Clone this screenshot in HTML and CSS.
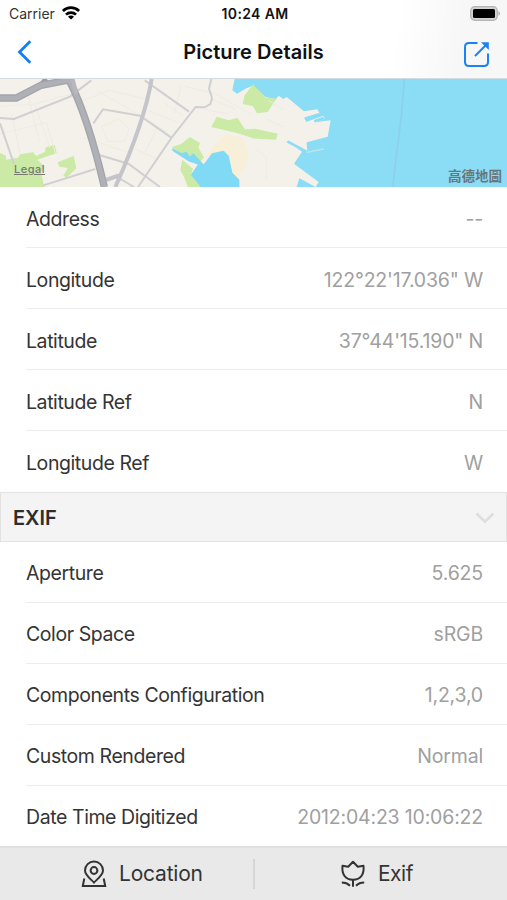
FILE: index.html
```html
<!DOCTYPE html>
<html lang="en">

<head>
    <meta charset="UTF-8">
    <meta name="viewport" content="width=device-width, initial-scale=1.0">
    <title>Picture Details</title>
    <link rel="stylesheet" href="styles.css">
</head>

<body>
    <div class="screen">
        <header class="header">
            <div class="status-bar">
                <div class="carrier">
                    <span>Carrier</span>
                    <svg class="wifi" viewBox="0 0 18 14" fill="none" stroke="#000" stroke-width="2.7">
                        <path d="M.9 5a11.5 11.5 0 0 1 16.2 0" />
                        <path d="M4 8.6a7.1 7.1 0 0 1 10 0" />
                        <path d="M9 13.6L6 10.7a4.2 4.2 0 0 1 6 0z" fill="#000" stroke="none" />
                    </svg>
                </div>
                <span class="time">10:24 AM</span>
                <svg class="battery" viewBox="0 0 31 15">
                    <rect x=".7" y=".7" width="26.6" height="13.6" rx="4" fill="#d2d2d2" stroke="#b4b4b4" stroke-width="1.2" />
                    <rect x="3" y="3" width="22" height="9" rx="1.5" fill="#000" />
                    <path d="M28.4 5q3.4 2.5 0 5z" fill="#b4b4b4" />
                </svg>
            </div>
            <div class="nav-bar">
                <svg class="back" viewBox="0 0 15 24" fill="none" stroke="#127df8" stroke-width="2.8">
                    <path d="M13.3 1.3L2.5 12l10.8 10.7" />
                </svg>
                <h1 class="title">Picture Details</h1>
                <svg class="share" viewBox="0 0 27 27" fill="none" stroke="#1a82f7" stroke-width="2">
                    <path d="M14.5 2H6Q2 2 2 6v15q0 4 4 4h15q4 0 4-4v-8.5" />
                    <path d="M12 15L23.5 3.5" />
                    <path d="M18 1.2h7.8V9z" fill="#1a82f7" stroke="none" />
                </svg>
            </div>
        </header>

        <div class="map">
            <svg class="map-tiles" viewBox="0 0 1521 324" preserveAspectRatio="none">
                <rect width="1521" height="324" fill="#8bdcf5" />
                <path d="M1213 0L1204 110L1178 324" fill="none" stroke="#8fcfee" stroke-width="5" />
                <!-- land -->
                <path d="M0 0H704L697 34L711 44L739 28L759 20L796 54L828 60L836 50L850 60L860 54L912 97L952 91L959 103L916 118L918 129L970 110L974 119L944 130L992 124L983 173L920 190L922 220L865 196L861 186L906 218L882 254L956 309L947 324L898 298L890 324H718L709 292L697 281L686 231L671 215L636 224L611 256L594 257L582 240L569 247L518 211L516 204L570 176L612 235L594 257L573 287L604 324H0Z" fill="#f3f1ea" />
                <path d="M640 202L680 165L725 178L746 224L730 275L711 300L697 281L686 231L671 215L636 224L612 242Z" fill="#f7efd7" />
                <!-- parks -->
                <g fill="#caeaa5">
                    <path d="M0 222L18 230V242L54 236L60 226L99 220L109 231L135 218L137 205L164 198L170 222L112 242L132 261L123 281L133 324H0Z" />
                    <path d="M173 250L221 231L229 268L200 296L190 290L203 267L178 263Z" />
                    <path d="M734 49L759 16L797 56L829 59L803 99L771 103L759 82L728 75Z" />
                    <path d="M650 113L687 124L712 116L735 151L766 149L833 164L828 182L759 178L714 163L634 144Z" />
                    <path d="M516 204L543 195L570 174L600 192L595 206L612 235L594 257L577 237L567 247L549 230Z" />
                    <path d="M547 242L579 270L573 286L602 324H564L552 294L541 273Z" />
                </g>
                <!-- bays and docks -->
                <path d="M516 207L545 223L560 218L569 233L580 223L612 257L636 223L671 215L686 231L697 281L718 302V324H602L573 287L594 257L581 252L568 248L518 216Z" fill="#80d9f5" />
                <path d="M914 119L957 106M943 127L971 117M862 187L925 221" fill="none" stroke="#8bdcf5" stroke-width="8" />
                <path d="M920 220L971 210" fill="none" stroke="#c8e3e5" stroke-width="4" />
                <!-- side streets -->
                <g fill="none" stroke="#eeebe5" stroke-width="3">
                    <path d="M0 82L100 76L225 42M0 165L139 131L167 225M80 32L118 190M35 105L60 225M104 75L150 207M239 68L330 34L450 63M292 36L408 101M250 175L398 225M305 142L356 120L387 147L374 187L325 188ZM435 120L503 160M405 210L468 238M435 220L475 140M445 95L535 131M488 68L548 110M543 20L523 104M554 22L648 45L754 107M638 62L706 90M615 92L682 104M805 64L849 92M800 121L853 145M765 208L799 235V301" />
                </g>
                <!-- streets -->
                <g fill="none" stroke="#d0cfd2" stroke-width="6">
                    <path d="M0 117L42 120L210 53L274 4M0 133L42 255M130 319L286 270M280 133L309 91L420 110L514 176M300 229L385 254L480 324M434 4L567 98M634 0L627 29L636 57L631 75L614 85L587 84L515 176L414 324M352 294L402 324" />
                </g>
                <path d="M455 0C440 90 398 208 346 324M318 303L352 291L359 306" fill="none" stroke="#c5c4ca" stroke-width="12" />
                <!-- freeway -->
                <g fill="none">
                    <path d="M0 57H49L123 20L140 0M171 3L203 2" stroke="#9c9ca5" stroke-width="18" />
                    <path d="M0 57H49L123 19L207 3C250 86 287 212 313 324" stroke="#a4a4ac" stroke-width="22" />
                    <path d="M0 57H49L123 19L207 3C250 86 287 212 313 324" stroke="#b0b0b7" stroke-width="14" />
                    <path d="M218 0L229 45" stroke="#b8b7bd" stroke-width="12" />
                </g>
            </svg>
            <span class="legal">Legal</span>
            <span class="map-brand">高德地圖</span>
        </div>

        <div class="list gps">
            <div class="row"><span class="label">Address</span><span class="value">--</span></div>
            <div class="row"><span class="label">Longitude</span><span class="value">122°22'17.036" W</span></div>
            <div class="row"><span class="label">Latitude</span><span class="value">37°44'15.190" N</span></div>
            <div class="row"><span class="label">Latitude Ref</span><span class="value">N</span></div>
            <div class="row"><span class="label">Longitude Ref</span><span class="value">W</span></div>
        </div>

        <div class="section-header">
            <h2>EXIF</h2>
            <svg class="chevron" viewBox="0 0 20 12" fill="none" stroke="#dedede" stroke-width="2.5">
                <path d="M1.5 1.5L10 9.7l8.5-8.2" />
            </svg>
        </div>

        <div class="list">
            <div class="row"><span class="label">Aperture</span><span class="value">5.625</span></div>
            <div class="row"><span class="label">Color Space</span><span class="value">sRGB</span></div>
            <div class="row"><span class="label">Components Configuration</span><span class="value">1,2,3,0</span></div>
            <div class="row"><span class="label">Custom Rendered</span><span class="value">Normal</span></div>
            <div class="row"><span class="label">Date Time Digitized</span><span class="value">2012:04:23 10:06:22</span></div>
        </div>

        <footer class="tab-bar">
            <div class="tab tab-location">
                <svg class="tab-icon" viewBox="0 0 26 28" fill="none" stroke="#333" stroke-width="2">
                    <path d="M13 22.5C9 18.5 4 15 4 10.5a9 9 0 0 1 18 0c0 4.5-5 8-9 12z" />
                    <circle cx="13" cy="10.5" r="3.4" />
                    <path d="M3.3 18.5L1.8 26h22.4l-1.5-7.5" />
                </svg>
                <span>Location</span>
            </div>
            <div class="divider"></div>
            <div class="tab tab-exif">
                <svg class="tab-icon" viewBox="0 0 26 28" fill="none" stroke="#333" stroke-width="2" stroke-linejoin="round">
                    <path d="M2.5 5.8l5.7 1L13 1.8l4.8 5 5.7-1c.8 8-2.3 14-10.5 14S1.7 13.8 2.5 5.8z" />
                    <path d="M13 20v6.8M1.8 22.5q5 0 8.2 3.2M24.2 22.5q-5 0-8.2 3.2" />
                </svg>
                <span>Exif</span>
            </div>
        </footer>
    </div>
</body>

</html>
```
FILE: styles.css
```css
* {
    box-sizing: border-box;
}

body {
    margin: 0;
    font-family: Inter, "Liberation Sans", sans-serif;
    background-color: #fff;
    color: #343434;
    overflow: hidden;
}

.screen {
    width: 507px;
    height: 900px;
    display: flex;
    flex-direction: column;
}

svg {
    display: block;
    flex-shrink: 0;
}

.header {
    height: 79px;
    background: linear-gradient(100deg, #fff 77%, #f7f7f8 90%);
    border-bottom: 1px solid #d3dcde;
}

.status-bar {
    height: 27px;
    padding: 0 6px 0 9px;
    display: grid;
    grid-template-columns: 1fr auto 1fr;
    align-items: center;
    font-size: 14px;
    color: #333;
}

.carrier {
    display: flex;
    align-items: center;
    gap: 7px;
}

.wifi {
    width: 18px;
    height: 14px;
    margin-bottom: 2px;
}

.time {
    font-size: 14px;
    font-weight: 600;
    color: #111;
    letter-spacing: 0.35px;
}

.battery {
    width: 31px;
    height: 15px;
    justify-self: end;
    margin-bottom: 1px;
}

.nav-bar {
    height: 51px;
    padding: 0 17px 1px;
    display: grid;
    grid-template-columns: 1fr auto 1fr;
    align-items: center;
}

.back {
    width: 15px;
    height: 24px;
}

.title {
    margin: 0;
    font-size: 20px;
    font-weight: 600;
    letter-spacing: 0.05px;
    color: #111;
}

.share {
    width: 27px;
    height: 27px;
    justify-self: end;
    margin-top: 4px;
}

.map {
    position: relative;
    height: 108px;
}

.map-tiles {
    width: 100%;
    height: 100%;
}

.legal {
    position: absolute;
    left: 14px;
    bottom: 11px;
    font-size: 11px;
    line-height: 14px;
    font-weight: 500;
    letter-spacing: 0.5px;
    text-decoration: underline;
    color: #77786f;
}

.map-brand {
    position: absolute;
    right: 5px;
    bottom: 3px;
    font-family: "Noto Sans CJK TC", sans-serif;
    font-size: 13.5px;
    line-height: 18px;
    font-weight: 700;
    color: #67777c;
}

.list {
    padding-left: 26px;
}

.row {
    height: 61px;
    padding: 1px 24px 0 0;
    display: flex;
    align-items: center;
    justify-content: space-between;
    border-bottom: 1px solid #ededed;
    font-size: 19.5px;
}

.gps .row {
    padding-top: 3px;
}

.row:last-child {
    height: 60px;
    padding-top: 2px;
    border-bottom: none;
}

.gps .row:last-child {
    height: 61px;
}

.label {
    letter-spacing: -0.42px;
}

.value {
    color: #a0a0a0;
    letter-spacing: -0.18px;
}

.section-header {
    height: 50px;
    padding: 1px 11px 0 12px;
    display: flex;
    align-items: center;
    justify-content: space-between;
    background-color: #f4f4f4;
    border: 1px solid #e2e2e2;
}

.section-header h2 {
    margin: 0;
    font-size: 20px;
    font-weight: 600;
    color: #2d2d2d;
}

.chevron {
    width: 20px;
    height: 12px;
}

.tab-bar {
    height: 54px;
    flex-shrink: 0;
    display: flex;
    align-items: center;
    background-color: #e9e9e9;
    border-top: 2px solid #e1e1e1;
}

.tab {
    display: flex;
    align-items: center;
    gap: 12px;
    margin-bottom: 1px;
    font-size: 21px;
    letter-spacing: -0.2px;
}

.tab-location {
    width: 253px;
    padding-left: 81px;
}

.tab-exif {
    flex: 1;
    padding-left: 85px;
    letter-spacing: -0.5px;
}

.tab-icon {
    width: 26px;
    height: 28px;
}

.divider {
    width: 2px;
    height: 30px;
    margin-bottom: 1px;
    background-color: #d6d6d6;
}
```
